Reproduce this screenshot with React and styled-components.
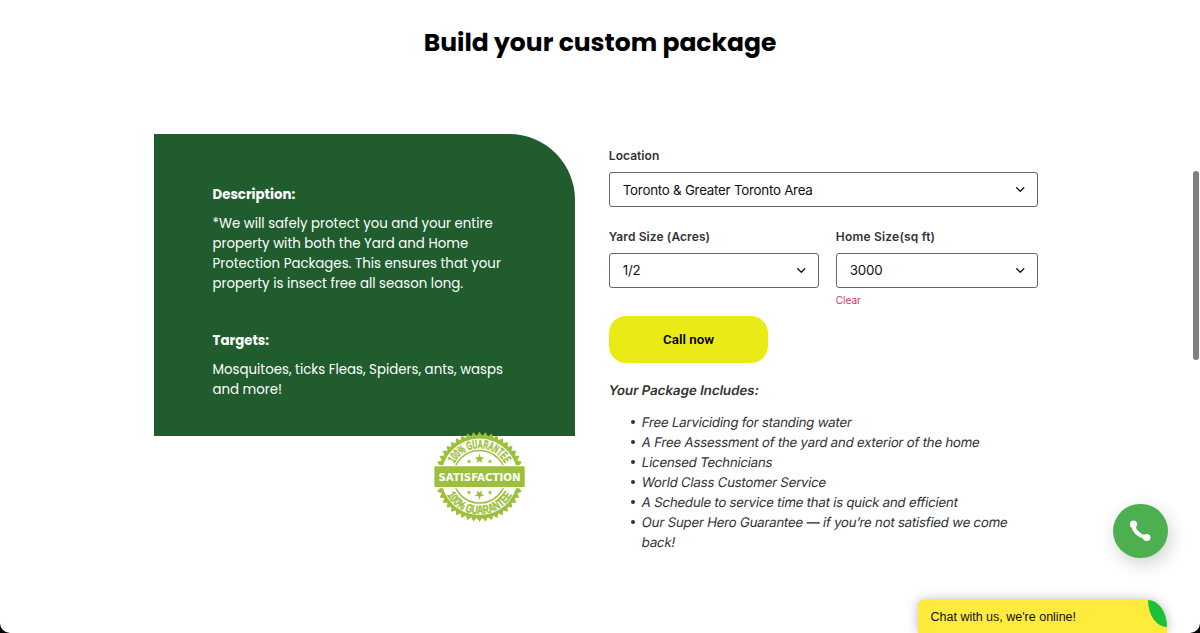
import React from "react";
import styled, { createGlobalStyle } from "styled-components";

const GlobalStyle = createGlobalStyle`
  * { box-sizing: border-box; }
  html, body { margin: 0; background: #000; overflow: hidden; }
`;

const Page = styled.div`
  position: relative;
  width: 1200px;
  height: 633px;
  overflow: hidden;
  background: #fff;
  border-radius: 0 0 10px 10px;
  font-family: Inter, "Liberation Sans", sans-serif;
  color: #333;
`;
const Title = styled.h1`
  margin: 0;
  padding-top: 23px;
  height: 134px;
  text-align: center;
  font: 700 25px/40px Poppins, Inter, sans-serif;
  color: #000;
`;
const Columns = styled.main`
  display: grid;
  grid-template-columns: 421.3px 429.5px;
  column-gap: 33.5px;
  padding-left: 154px;
  align-items: start;
`;
const InfoColumn = styled.div`
  display: flex;
  flex-direction: column;
`;
const InfoCard = styled.section`
  height: 302px;
  padding: 50.5px 58.5px 0;
  background: #205c2e;
  color: #fff;
  border-radius: 0 66px 0 0;
`;
const InfoHeading = styled.h2`
  margin: ${(p) => p.$top || 0}px 0 9px;
  font: 700 13.33px/20px Poppins, Inter, sans-serif;
`;
const InfoText = styled.p`
  margin: 0;
  font: 400 13.33px/20px Poppins, Inter, sans-serif;
`;
const Line = styled.span`
  display: block;
  white-space: nowrap;
`;
const Seal = styled.svg`
  width: 92px;
  height: 92px;
  margin: -5.5px 0 0 279.5px;
`;
const Form = styled.form`
  padding-top: 13px;
`;
const FieldRow = styled.div`
  display: grid;
  grid-template-columns: ${(p) => p.$columns || "1fr"};
  column-gap: 16.5px;
  margin-bottom: ${(p) => p.$bottom || 0}px;
`;
const Field = styled.label`
  display: flex;
  flex-direction: column;
`;
const Label = styled.span`
  font-size: 12px;
  line-height: 18px;
  font-weight: 600;
  letter-spacing: ${(p) => p.$track || 0}px;
  margin-bottom: 7px;
`;
const Select = styled.span`
  display: flex;
  align-items: center;
  justify-content: space-between;
  height: 35px;
  padding: 0 12px 0 13px;
  border: 1px solid #666;
  border-radius: 3px;
  color: #111;
  font-size: 13.33px;
  letter-spacing: ${(p) => p.$track || 0}px;
`;
const Clear = styled.a`
  margin-top: 4.5px;
  font-size: 10px;
  line-height: 16px;
  color: #c36;
`;
const CallButton = styled.button`
  display: block;
  width: 159.5px;
  height: 46.5px;
  padding: 0;
  border: 0;
  border-radius: 17px;
  background: #eaea17;
  color: #000;
  font: 600 13.33px Roboto, sans-serif;
`;
const Slanted = styled.span`
  display: inline-block;
  white-space: nowrap;
  transform: skewX(-10deg);
  letter-spacing: ${(p) => p.$track || 0}px;
`;
const Includes = styled.h3`
  margin: 17px 0 12px;
  font-size: 13.33px;
  line-height: 20px;
  font-weight: 600;
`;
const Perks = styled.ul`
  margin: 0;
  padding: 0 0 0 22px;
  list-style: none;
  font-size: 13.33px;
  line-height: 20px;
`;
const Perk = styled.li`
  display: flex;
  &::before {
    content: "";
    flex: none;
    width: 4.5px;
    height: 4.5px;
    margin: 8.2px 6.5px 0 0;
    border-radius: 50%;
    background: #333;
  }
`;
const PerkLines = styled.div`
  display: flex;
  flex-direction: column;
  align-items: flex-start;
`;
const CallBubble = styled.a`
  position: absolute;
  left: 1113px;
  top: 503.5px;
  width: 54.5px;
  height: 54.5px;
  display: grid;
  place-items: center;
  border-radius: 50%;
  background: #4caf50;
  box-shadow: 3px 6px 18px rgba(0, 0, 0, 0.18);
`;
const ChatBar = styled.aside`
  position: absolute;
  left: 917.5px;
  bottom: 0;
  width: 249.8px;
  height: 33.5px;
  padding-left: 13px;
  border-radius: 5px 19.5px 0 0 / 5px 27.5px 0 0;
  background: #ffeb3b;
  box-shadow: 0 0 12px rgba(0, 0, 0, 0.28);
  color: #111;
  font: 12.5px/34px "Liberation Sans", Arial, sans-serif;
`;
const Leaf = styled.span`
  position: absolute;
  right: 0;
  top: 0;
  width: 19.5px;
  height: 27.5px;
  background: #1dc03b;
  border-radius: 0 100% 0 100%;
`;
const ScrollThumb = styled.div`
  position: absolute;
  left: 1193px;
  top: 170.5px;
  width: 6px;
  height: 189.5px;
  border-radius: 3px;
  background: #808080;
`;

const Chevron = () => (
  <svg width="10" height="7" viewBox="0 0 10 7" fill="none">
    <path d="M1.700 1.800 5.300 5.200l3.500-3.400" stroke="#111" strokeWidth="1.3" strokeLinecap="round" strokeLinejoin="round" />
  </svg>
);

const radial = (count, outer, inner, cx, cy, phase = -Math.PI / 2) =>
  Array.from({ length: count * 2 }, (_, i) => {
    const r = i % 2 ? inner : outer;
    const a = phase + (Math.PI * i) / count;
    return `${(cx + r * Math.cos(a)).toFixed(2)},${(cy + r * Math.sin(a)).toFixed(2)}`;
  }).join(" ");

const SealArt = () => (
  <Seal viewBox="0 0 92 92" fontFamily="Liberation Sans Narrow, Liberation Sans, sans-serif" fontWeight="700">
    <polygon points={radial(46, 45, 41.2, 45.5, 45.8)} fill="#9dc03b" />
    <circle cx="45.5" cy="45.8" r="38.3" fill="#fff" />
    <circle cx="45.5" cy="45.8" r="26.300" fill="#fff" stroke="#9dc03b" strokeWidth="1.500" />
    <path id="sealTop" d="M17 45.800a28.500 28.500 0 0 1 57 0" fill="none" />
    <path id="sealBottom" d="M8.300 45.800a37.200 37.200 0 0 0 74.400 0" fill="none" />
    <g fill="#9dc03b" stroke="#9dc03b" strokeWidth=".5" fontSize="12" textAnchor="middle">
      <text><textPath href="#sealTop" startOffset="50%" textLength="62" lengthAdjust="spacingAndGlyphs">100% GUARANTEE</textPath></text>
      <text><textPath href="#sealBottom" startOffset="50%" textLength="79" lengthAdjust="spacingAndGlyphs">100% GUARANTEE</textPath></text>
    </g>
    <g fill="#9dc03b">
      <polygon points={radial(5, 5, 2.100, 45.500, 28)} />
      <polygon points={radial(5, 2.500, 1.100, 35, 30.500)} />
      <polygon points={radial(5, 2.500, 1.100, 56, 30.500)} />
      <polygon points={radial(5, 5, 2.100, 45.500, 63.500, Math.PI / 2)} />
      <polygon points={radial(5, 2.500, 1.100, 35, 61.500)} />
      <polygon points={radial(5, 2.500, 1.100, 56, 61.500)} />
    </g>
    <rect x="0" y="34.300" width="91" height="23" rx="1" fill="#fff" />
    <rect x=".4" y="35.300" width="90.300" height="20.600" rx="1" fill="#9dc03b" />
    <text x="45.500" y="49.500" textAnchor="middle" fontFamily="DejaVu Sans, sans-serif" fontSize="10.500" fill="#fff" textLength="82" lengthAdjust="spacingAndGlyphs">SATISFACTION</text>
  </Seal>
);

const perks = [
  ["Free Larviciding for standing water"],
  ["A Free Assessment of the yard and exterior of the home"],
  ["Licensed Technicians"],
  ["World Class Customer Service"],
  ["A Schedule to service time that is quick and efficient"],
  ["Our Super Hero Guarantee — if you’re not satisfied we come", "back!"],
];

export default function App() {
  return (
    <>
      <GlobalStyle />
      <Page>
        <Title>Build your custom package</Title>
        <Columns>
          <InfoColumn>
            <InfoCard>
              <InfoHeading>Description:</InfoHeading>
              <InfoText>
                <Line>*We will safely protect you and your entire </Line>
                <Line>property with both the Yard and Home </Line>
                <Line>Protection Packages. This ensures that your </Line>
                <Line>property is insect free all season long.</Line>
              </InfoText>
              <InfoHeading $top={37}>Targets:</InfoHeading>
              <InfoText>
                <Line>Mosquitoes, ticks Fleas, Spiders, ants, wasps </Line>
                <Line>and more!</Line>
              </InfoText>
            </InfoCard>
            <SealArt />
          </InfoColumn>
          <Form>
            <FieldRow $bottom={20.5}>
              <Field>
                <Label $track={0.05}>Location</Label>
                <Select $track={-0.24}>Toronto &amp; Greater Toronto Area<Chevron /></Select>
              </Field>
            </FieldRow>
            <FieldRow $columns="210.5px 202.5px" $bottom={8}>
              <Field>
                <Label $track={0.1}>Yard Size (Acres)</Label>
                <Select $track={-0.2}>1/2<Chevron /></Select>
              </Field>
              <Field>
                <Label $track={0.2}>Home Size(sq ft)</Label>
                <Select $track={-0.2}>3000<Chevron /></Select>
                <Clear>Clear</Clear>
              </Field>
            </FieldRow>
            <CallButton type="button">Call now</CallButton>
            <Includes><Slanted $track={-0.04}>Your Package Includes:</Slanted></Includes>
            <Perks>
              {perks.map((lines) => (
                <Perk key={lines[0]}>
                  <PerkLines>
                    {lines.map((l) => <Slanted key={l} $track={-0.27}>{l}</Slanted>)}
                  </PerkLines>
                </Perk>
              ))}
            </Perks>
          </Form>
        </Columns>
        <CallBubble>
          <svg width="22" height="22" viewBox="0 0 22 22">
            <path d="M3.800 4.500Q5.200 14.300 17 17.700" fill="none" stroke="#fff" strokeWidth="4" />
            <ellipse cx="4.500" cy="4.200" rx="3.600" ry="3.800" fill="#fff" />
            <ellipse cx="17.700" cy="17.500" rx="3.800" ry="3.600" fill="#fff" />
          </svg>
        </CallBubble>
        <ChatBar>Chat with us, we're online!<Leaf /></ChatBar>
        <ScrollThumb />
      </Page>
    </>
  );
}
